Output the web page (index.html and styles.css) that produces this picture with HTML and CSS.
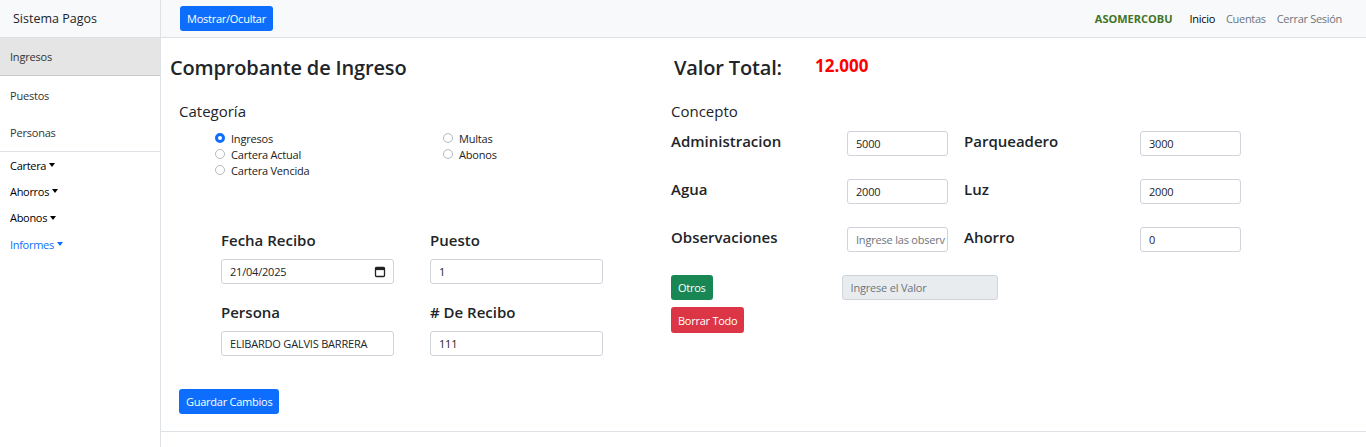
FILE: index.html
```html
<!DOCTYPE html>
<html lang="es">
<head>
<meta charset="utf-8">
<title>Sistema Pagos</title>
<link rel="stylesheet" href="styles.css">
</head>
<body>
<div class="layout">
  <aside class="sidebar">
    <div class="brand">Sistema Pagos</div>
    <nav class="side-list">
      <a class="side-item active">Ingresos</a>
      <a class="side-item">Puestos</a>
      <a class="side-item">Personas</a>
    </nav>
    <div class="side-drops">
      <a class="drop">Cartera<span class="caret"></span></a>
      <a class="drop">Ahorros<span class="caret"></span></a>
      <a class="drop">Abonos<span class="caret"></span></a>
      <a class="drop blue">Informes<span class="caret"></span></a>
    </div>
  </aside>
  <div class="main">
    <header class="topbar">
      <button class="btn btn-primary">Mostrar/Ocultar</button>
      <div class="top-links">
        <span class="org">ASOMERCOBU</span>
        <a class="tl dark">Inicio</a>
        <a class="tl">Cuentas</a>
        <a class="tl">Cerrar Sesión</a>
      </div>
    </header>
    <section class="content">
      <div class="col-left">
        <h2 class="title">Comprobante de Ingreso</h2>
        <h3 class="subtitle indent">Categoría</h3>
        <div class="radios">
          <label class="radio"><span class="dot checked"></span>Ingresos</label>
          <label class="radio"><span class="dot"></span>Multas</label>
          <label class="radio"><span class="dot"></span>Cartera Actual</label>
          <label class="radio"><span class="dot"></span>Abonos</label>
          <label class="radio"><span class="dot"></span>Cartera Vencida</label>
        </div>
        <div class="form-grid">
          <div class="field">
            <div class="flabel">Fecha Recibo</div>
            <div class="input date"><span>21/04/2025</span>
              <svg width="12" height="12" viewBox="0 0 12 12"><rect x="1.5" y="1.5" width="9" height="9" rx="1" fill="none" stroke="#222" stroke-width="1.3"/><rect x="1.5" y="1.5" width="9" height="2.6" fill="#222"/></svg>
            </div>
          </div>
          <div class="field">
            <div class="flabel">Puesto</div>
            <div class="input">1</div>
          </div>
          <div class="field">
            <div class="flabel">Persona</div>
            <div class="input">ELIBARDO GALVIS BARRERA</div>
          </div>
          <div class="field">
            <div class="flabel"># De Recibo</div>
            <div class="input">111</div>
          </div>
        </div>
        <button class="btn btn-primary save">Guardar Cambios</button>
      </div>
      <div class="col-right">
        <div class="total">
          <h2 class="title">Valor Total:</h2>
          <span class="amount">12.000</span>
        </div>
        <h3 class="subtitle">Concepto</h3>
        <div class="concept-grid">
          <div class="clabel">Administracion</div><div class="input sm">5000</div>
          <div class="clabel">Parqueadero</div><div class="input sm">3000</div>
          <div class="clabel">Agua</div><div class="input sm">2000</div>
          <div class="clabel">Luz</div><div class="input sm">2000</div>
          <div class="clabel">Observaciones</div><div class="input sm placeholder">Ingrese las observ</div>
          <div class="clabel">Ahorro</div><div class="input sm">0</div>
        </div>
        <div class="others">
          <button class="btn btn-success">Otros</button>
          <div class="input disabled">Ingrese el Valor</div>
        </div>
        <button class="btn btn-danger">Borrar Todo</button>
      </div>
    </section>
    <footer class="footer"></footer>
  </div>
</div>
</body>
</html>
```
FILE: styles.css
```css
* { box-sizing: border-box; }
html, body { margin: 0; padding: 0; }
body {
  font-family: "Open Sans", "Noto Sans", "Liberation Sans", sans-serif;
  color: #212529;
  background: #fff;
  font-size: 12px;
}
.layout { display: flex; min-height: 447px; }
.sidebar {
  width: 161px;
  flex: 0 0 161px;
  border-right: 1px solid #dee2e6;
}
.brand {
  height: 38px;
  background: #f8f9fa;
  border-bottom: 1px solid #dee2e6;
  padding-left: 13px;
  display: flex;
  align-items: center;
  font-size: 12.5px;
  color: #212529;
}
.side-list { border-bottom: 1px solid #dee2e6; }
.side-item {
  display: flex;
  align-items: center;
  height: 38px;
  padding-left: 10px;
  font-size: 11px;
  color: #333;
  letter-spacing: -0.2px;
}
.side-item:last-child { height: 37px; }
.side-item.active { background: #e5e5e5; border-bottom: 1px solid #c9c9c9; }
.side-drops { display: flex; flex-direction: column; }
.drop {
  height: 26.3px;
  display: flex;
  align-items: center;
  padding-left: 10px;
  font-size: 11px;
  color: #000;
  letter-spacing: -0.3px;
}
.drop.blue { color: #0d6efd; }
.caret {
  display: inline-block;
  margin-left: 3px;
  border-left: 3.5px solid transparent;
  border-right: 3.5px solid transparent;
  border-top: 4px solid currentColor;
}
.main { flex: 1; display: flex; flex-direction: column; }
.topbar {
  height: 38px;
  background: #f8f9fa;
  border-bottom: 1px solid #dee2e6;
  display: flex;
  align-items: center;
  justify-content: space-between;
  padding: 0 24px 0 19px;
}
.btn {
  font-family: inherit;
  border: 0;
  border-radius: 3px;
  color: #fff;
  font-size: 11px;
  height: 25px;
  padding: 0 7px;
  letter-spacing: -0.25px;
  cursor: pointer;
}
.btn-primary { background: #0d6efd; }
.btn-success { background: #198754; }
.btn-danger { background: #dc3545; height: 26px; }
.top-links { display: flex; align-items: center; gap: 11px; font-size: 11px; letter-spacing: -0.3px; }
.org { font-weight: 700; color: #417427; margin-right: 6px; letter-spacing: 0; }
.tl { color: #6c757d; }
.tl.dark { color: #000; }
.content { display: flex; height: 393px; }
.col-left { width: 500px; padding: 18px 0 0 9px; }
.col-right { flex: 1; padding: 18px 0 0 10px; }
.title { font-size: 20px; font-weight: 600; margin: 0; line-height: 24px; letter-spacing: -0.15px; }
.subtitle { font-size: 15px; font-weight: 500; margin: 0; line-height: 20px; }
.col-left .subtitle { margin-top: 21px; }
.indent { padding-left: 9px; }
.radios {
  display: grid;
  grid-template-columns: 228px 228px;
  padding-left: 45px;
  margin-top: 9px;
}
.radio { display: flex; align-items: center; height: 16px; font-size: 11px; letter-spacing: -0.2px; color: #222; }
.dot {
  width: 10px; height: 10px;
  border: 1px solid #b5b9bd;
  border-radius: 50%;
  margin-right: 6px;
  background: #fff;
}
.dot.checked { border: 3px solid #0d6efd; }
.form-grid {
  display: grid;
  grid-template-columns: 173px 173px;
  column-gap: 36px;
  row-gap: 18px;
  margin: 52px 0 0 51px;
}
.flabel { font-size: 15px; font-weight: 600; line-height: 20px; margin-bottom: 9px; }
.input {
  height: 25px;
  border: 1px solid #ced4da;
  border-radius: 3px;
  display: flex;
  align-items: center;
  padding: 0 8px;
  font-size: 11px;
  background: #fff;
  color: #212529;
  letter-spacing: -0.2px;
  white-space: nowrap;
  overflow: hidden;
}
.input.date { justify-content: space-between; padding-right: 7px; }
.save { margin: 33px 0 0 9px; }
.total { display: flex; align-items: flex-start; margin-left: 3px; }
.amount { color: #ff0000; font-size: 17px; font-weight: 700; margin-left: 33px; line-height: 20px; margin-top: 0; }
.col-right .subtitle { margin-top: 21px; }
.concept-grid {
  display: grid;
  grid-template-columns: 176px 117px 176px 101px;
  row-gap: 23px;
  margin-top: 10px;
}
.concept-grid .input:nth-child(4n+2) { margin-right: 16px; }
.clabel { font-size: 15px; font-weight: 600; line-height: 20px; }
.input.sm { font-size: 11px; }
.input.placeholder { color: #6c757d; }
.others { display: flex; align-items: center; margin-top: 23px; gap: 129px; }
.input.disabled { width: 156px; background: #e9ecef; color: #6c757d; }
.btn-danger { margin-top: 7px; display: block; }
.footer { border-top: 1px solid #dee2e6; flex: 1; }
```
